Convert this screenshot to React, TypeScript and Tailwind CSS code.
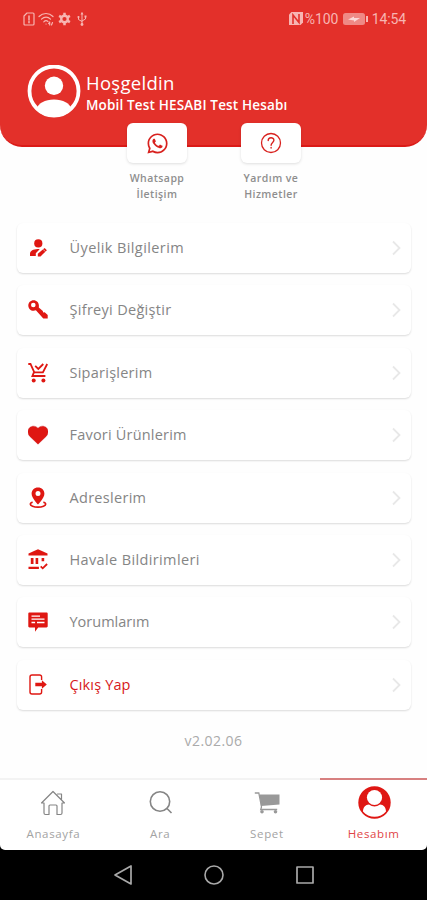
import type { ReactNode } from 'react';
import { FaWhatsapp } from 'react-icons/fa';

const RED = '#df1712';

const stroke = { fill: 'none', stroke: 'currentColor', strokeLinecap: 'round', strokeLinejoin: 'round' } as const;

function Svg({ w = 20, h = 20, children }: { w?: number; h?: number; children: ReactNode }) {
  return (
    <svg width={w} height={h} viewBox={`0 0 ${w} ${h}`} className="block shrink-0">
      {children}
    </svg>
  );
}

const UserEdit = () => (
  <Svg>
    <circle cx="10.3" cy="5.4" r="4.1" fill={RED} />
    <path d="M2 18v-2.300C2 13 5.500 11.300 9.500 11.100c.9 0 1.600.1 2.200.2L7.800 15.200V18z" fill={RED} />
    <path d="M9.800 18.400v-2.600l6.800-5.800 2.300 2.300-6.400 6.100z" fill={RED} />
    <path d="m15 11.300 2.400 2.400" stroke="white" strokeWidth=".6" />
  </Svg>
);

const Key = () => (
  <Svg>
    <path fillRule="evenodd" d="M5.600.2C2.600.2.3 2.500.3 5.500s2.300 5.300 5.300 5.300c.8 0 1.600-.2 2.300-.5l7.400 8.200h4.400v-3.600l-3-2.600-1.500.3-.4-1.700-4-3.500c.1-.6.1-1.200.1-1.900C10.900 2.500 8.600.2 5.600.2zM5.300 2.700a2.300 2.300 0 1 1 0 4.600 2.300 2.300 0 0 1 0-4.600z" fill={RED} />
  </Svg>
);

const CartCheck = () => (
  <Svg>
    <g fill="none" stroke={RED} strokeWidth="1.800">
      <path d="M.3 1h2.200l3.800 8.300h8.600l4.300-8.300" />
      <path d="M7.200 2.800l3.100 3.100L15.300 1" />
      <path d="M5.900 9.300l-1.500 3.700h13" />
    </g>
    <circle cx="5.700" cy="17.600" r="2" fill={RED} />
    <circle cx="15.400" cy="17.600" r="2" fill={RED} />
  </Svg>
);

const Heart = () => (
  <Svg>
    <path d="M10 19.200 1.900 11.400C-.8 8.500-.4 4.600 1.600 2.700 4 .5 7.700.6 10 3.300 12.300.6 16 .5 18.400 2.700c2 1.900 2.400 5.800-.3 8.700z" fill={RED} stroke="#c9151b" strokeWidth=".4" />
  </Svg>
);

const Pin = () => (
  <Svg h={22}>
    <path fillRule="evenodd" d="M10 .5C6.200.5 3.600 3.200 3.600 6.700 3.600 10.900 10 17.500 10 17.500s6.400-6.600 6.400-10.800C16.400 3.200 13.800.5 10 .5zm0 3.600a2.500 2.500 0 1 1 0 5 2.500 2.500 0 0 1 0-5z" fill={RED} />
    <path d="M4.600 15.100c-1.500.5-2.300 1.200-2.300 2 0 1.700 3.400 3.100 7.700 3.100s7.700-1.400 7.700-3.100c0-.8-.8-1.500-2.300-2" fill="none" stroke={RED} strokeWidth="1.700" />
  </Svg>
);

const Bank = () => (
  <Svg h={21}>
    <path d="M10 .2 19.500 4.500v2H.5v-2z" fill={RED} />
    <path d="M2.800 8.900h2.700v6.100H2.800zM7.600 8.900h2.600v6.100H7.600zM13.600 8.900h2.600v3.400h-2.600zM.5 17.700h10.400V20H.5z" fill={RED} />
    <path d="m12.700 17.300 2 2 4.400-4.300" stroke={RED} strokeWidth="1.800" fill="none" />
  </Svg>
);

const Comment = () => (
  <Svg>
    <path d="M1.500.4h17c.7 0 1.200.5 1.200 1.100v12.700c0 .7-.5 1.200-1.200 1.200h-8.300L7 19.800v-4.400H1.500c-.7 0-1.200-.5-1.200-1.200V1.500C.3.900.8.4 1.500.4z" fill={RED} />
    <path d="M3.500 4.200h8.500M3.500 7.200h13M3.500 10.500h3.600M9 10.500h7.500" stroke="white" strokeWidth="1.300" />
  </Svg>
);

const Exit = () => (
  <Svg h={21}>
    <path d="M13.600 6V3c0-1.200-.8-2-2-2H4C2.800 1 2 1.800 2 3v15c0 1.200.8 2 2 2h7.600c1.200 0 2-.8 2-2v-3" fill="none" stroke={RED} strokeWidth="1.400" />
    <path d="M7.300 8.800h6.600V6.200l4.900 4.300-4.900 4.300v-2.600H7.300z" fill={RED} />
  </Svg>
);

const items = [
  { label: 'Üyelik Bilgilerim', icon: <UserEdit />, cls: 'tracking-[0.4px] text-[#858585]' },
  { label: 'Şifreyi Değiştir', icon: <Key />, cls: 'tracking-[0.3px] text-[#858585]' },
  { label: 'Siparişlerim', icon: <CartCheck />, cls: 'tracking-[0.25px] text-[#858585]' },
  { label: 'Favori Ürünlerim', icon: <Heart />, cls: 'tracking-[0.2px] text-[#858585]' },
  { label: 'Adreslerim', icon: <Pin />, cls: 'tracking-[0.3px] text-[#858585]' },
  { label: 'Havale Bildirimleri', icon: <Bank />, cls: 'tracking-[0.37px] text-[#858585]' },
  { label: 'Yorumlarım', icon: <Comment />, cls: 'text-[#858585]' },
  { label: 'Çıkış Yap', icon: <Exit />, cls: 'tracking-[0.15px] text-[#d71920]' },
];

function StatusBar() {
  return (
    <div className="flex h-[37px] items-center justify-between pl-[23px] pr-[21px] text-[#f7b5b2]">
      <div className="flex items-center">
        <Svg w={12} h={14}>
          <path d="M4 1h6q1 0 1 1v10q0 1-1 1H2q-1 0-1-1V4z" {...stroke} strokeWidth="1.200" />
          <path d="M6 4v4M6 9.500v1.300" {...stroke} strokeWidth="1.500" />
        </Svg>
        <span className="w-[3px]" />
        <Svg w={17} h={14}>
          <g {...stroke} strokeWidth="1.200">
            <path d="M1 4.500C5 .5 11 .5 15 4.500M3.500 7.200c2.800-2.800 6.300-2.800 9 0M5.800 9.800c1.300-1.300 2.800-1.400 4.200-.4" />
            <path d="M8 12h.1M10.500 11.500l1.200-1.500v3M13.500 13l1-2.500" />
          </g>
        </Svg>
        <span className="w-[3px]" />
        <Svg w={13} h={14}>
          <circle cx="6.500" cy="7" r="3.300" fill="none" stroke="currentColor" strokeWidth="2.400" />
          <path d="M6.500.8v3M6.500 10.200v3M1.100 3.900l2.600 1.500M9.300 8.600l2.600 1.500M1.100 10.100l2.600-1.500M9.300 5.400l2.600-1.500" stroke="currentColor" strokeWidth="2.500" />
        </Svg>
        <span className="w-[5px]" />
        <Svg w={12} h={14}>
          <path d="M6 1v11M2.500 5v2.500L6 9.500M9.500 4.500v2.500L6 9" {...stroke} strokeWidth="1" />
          <path d="M6 0 4.500 2.500h3zM8.500 3.500h2v2h-2z" fill="currentColor" />
          <circle cx="2.500" cy="5" r="1.100" fill="currentColor" />
          <circle cx="6" cy="12.500" r="1.400" fill="currentColor" />
        </Svg>
      </div>
      <div className="flex items-center font-['Roboto',sans-serif] text-[14px] leading-none">
        <Svg w={14} h={13}>
          <path d="M2.500 0H14v10.500L11.500 13H0V2.500z" fill="currentColor" />
          <path d="M4 12V3l6 7.500V2" fill="none" stroke="#e3302a" strokeWidth="1.600" />
        </Svg>
        <span className="ml-[2px] w-[35px]">%100</span>
        <span className="ml-[3px]">
          <Svg w={25} h={12}>
            <rect width="22" height="12" rx="2.500" fill="#ef8985" />
            <path d="M5 6.500 11 3.500v1.500h6L11 9V7.500z" fill="#fbd9d8" />
            <path d="M23 3h2v6h-2z" fill="currentColor" />
          </Svg>
        </span>
        <span className="ml-[4px] tracking-[-0.1px]">14:54</span>
      </div>
    </div>
  );
}

function Shortcut({ icon, lines }: { icon: ReactNode; lines: [string, string] }) {
  return (
    <div className="flex w-[114px] flex-col items-center">
      <div className="flex h-[40px] w-[60px] items-center justify-center rounded-[6px] bg-white text-[#d8211e] shadow-[0_1px_3px_rgba(0,0,0,0.13)]">
        {icon}
      </div>
      <div className="mt-[7px] text-center text-[10.5px] leading-[16px] font-semibold tracking-[0.45px] text-[#8e8e8e]">
        <div>{lines[0]}</div>
        <div>{lines[1]}</div>
      </div>
    </div>
  );
}

function Tab({ icon, label, active = false }: { icon: ReactNode; label: string; active?: boolean }) {
  return (
    <div
      className={
        'flex flex-1 flex-col items-center border-t-2 ' +
        (active ? 'border-[#d78080] text-[#df4546]' : 'border-[#f3f3f3] text-[#a3a3a3]')
      }
    >
      <div className="flex h-[46px] items-center">{icon}</div>
      <div className="text-[11.5px] leading-[16px] font-medium tracking-[0.65px]">{label}</div>
    </div>
  );
}

export default function App() {
  return (
    <div className="flex h-[900px] w-[427px] flex-col overflow-hidden bg-[#fefefe] font-['Open_Sans','Noto_Sans',sans-serif]">
      <header className="h-[147px] shrink-0 rounded-b-[22px] border-b-2 border-[#db1a17] bg-[#e3302a]">
        <StatusBar />
        <div className="mt-[28px] flex items-center pl-[27px] text-white">
          <Svg w={54} h={54}>
            <clipPath id="avatar">
              <circle cx="27" cy="26" r="26" />
            </clipPath>
            <circle cx="27" cy="26" r="24.500" fill="none" stroke="white" strokeWidth="3.800" />
            <circle cx="27" cy="20.800" r="9.200" fill="white" />
            <path d="M9 45c2-7 9-10.500 18-10.500S43 38 45 45L40 54H14z" fill="white" clipPath="url(#avatar)" />
          </Svg>
          <div className="ml-[5px] pt-[1px]">
            <div className="text-[18.5px] leading-[24px] font-medium tracking-[0.3px]">Hoşgeldin</div>
            <div className="text-[13.5px] leading-[20px] font-semibold tracking-[0.16px] whitespace-nowrap">Mobil Test HESABI Test Hesabı</div>
          </div>
        </div>
      </header>

      <section className="-mt-[24px] ml-px flex justify-center">
        <Shortcut icon={<FaWhatsapp size={23} />} lines={['Whatsapp', 'İletişim']} />
        <Shortcut
          icon={
            <Svg w={22} h={22}>
              <circle cx="11" cy="11" r="9.500" {...stroke} strokeWidth="1.300" />
              <path d="M8.200 8.500c0-3.700 5.700-3.600 5.700-.3 0 2.100-2.800 2.400-2.800 5M11.100 15.500v.5" {...stroke} strokeWidth="1.400" />
            </Svg>
          }
          lines={['Yardım ve', 'Hizmetler']}
        />
      </section>

      <nav className="mt-[21px] mr-[16px] ml-[17px] flex flex-col gap-[12.4px]">
        {items.map((item) => (
          <div
            key={item.label}
            className="flex h-[50px] items-center rounded-[6px] bg-white pr-[10px] pl-[11px] shadow-[0_1px_2px_rgba(0,0,0,0.14)]"
          >
            {item.icon}
            <span className={'ml-[21.5px] flex-1 text-[14.5px] leading-[20px] ' + item.cls}>{item.label}</span>
            <Svg w={9} h={16}>
              <path d="m1 1.500 6.500 6.500L1 14.500" fill="none" stroke="#e8e8e8" strokeWidth="1.800" />
            </Svg>
          </div>
        ))}
      </nav>

      <div className="mt-[21px] text-center text-[14px] leading-[20px] tracking-[0.45px] text-[#aaaaaa]">v2.02.06</div>

      <div className="mt-auto shrink-0 bg-black">
        <div className="flex h-[72px] overflow-hidden rounded-b-[5px] bg-white">
          <Tab
            label="Anasayfa"
            icon={
              <Svg w={26} h={26}>
                <path d="M1.500 13 13 1.500 24.500 13H22v10q0 1.500-1.500 1.500H17V16q0-1-1-1h-6q-1 0-1 1v8.500H5.500Q4 24.500 4 23V13zM17.500 4h4v6" {...stroke} stroke="#858585" strokeWidth="1.200" />
              </Svg>
            }
          />
          <Tab
            label="Ara"
            icon={
              <Svg w={26} h={26}>
                <circle cx="13" cy="11.500" r="9.700" {...stroke} stroke="#858585" strokeWidth="1.600" />
                <path d="m20 18.500 4.500 4.500" stroke="#858585" strokeWidth="1.600" />
              </Svg>
            }
          />
          <Tab
            label="Sepet"
            icon={
              <Svg w={26} h={24}>
                <path d="M5.500 3.500h20v10L7 15z" fill="#999" />
                <path d="M.8 2h4l2.700 14-.8 2.500h16.500" fill="none" stroke="#999" strokeWidth="1.300" />
                <circle cx="8" cy="20.800" r="1.800" fill="#999" />
                <circle cx="21.500" cy="20.800" r="1.800" fill="#999" />
              </Svg>
            }
          />
          <Tab
            active
            label="Hesabım"
            icon={
              <Svg w={34} h={34}>
                <circle cx="17.500" cy="16.500" r="16.200" fill="#df1713" />
                <circle cx="17.500" cy="11.500" r="7.600" fill="white" />
                <path d="M6 25.500c0-4 2.500-7 6-7 3.500 2.600 7.500 2.600 11 0 3.500 0 6 3 6 7-5.500 7-17.500 7-23 0z" fill="white" />
              </Svg>
            }
          />
        </div>
        <div className="flex h-[50px] items-center justify-center gap-[71px] text-[#a9a9a9]">
          <Svg w={20} h={20}>
            <path d="M18 1v18L2 10z" {...stroke} strokeWidth="1.700" />
          </Svg>
          <Svg w={20} h={20}>
            <circle cx="10" cy="10" r="9" {...stroke} strokeWidth="1.600" />
          </Svg>
          <Svg w={20} h={20}>
            <path d="M2 2h16v16H2z" {...stroke} strokeWidth="1.700" />
          </Svg>
        </div>
      </div>
    </div>
  );
}
